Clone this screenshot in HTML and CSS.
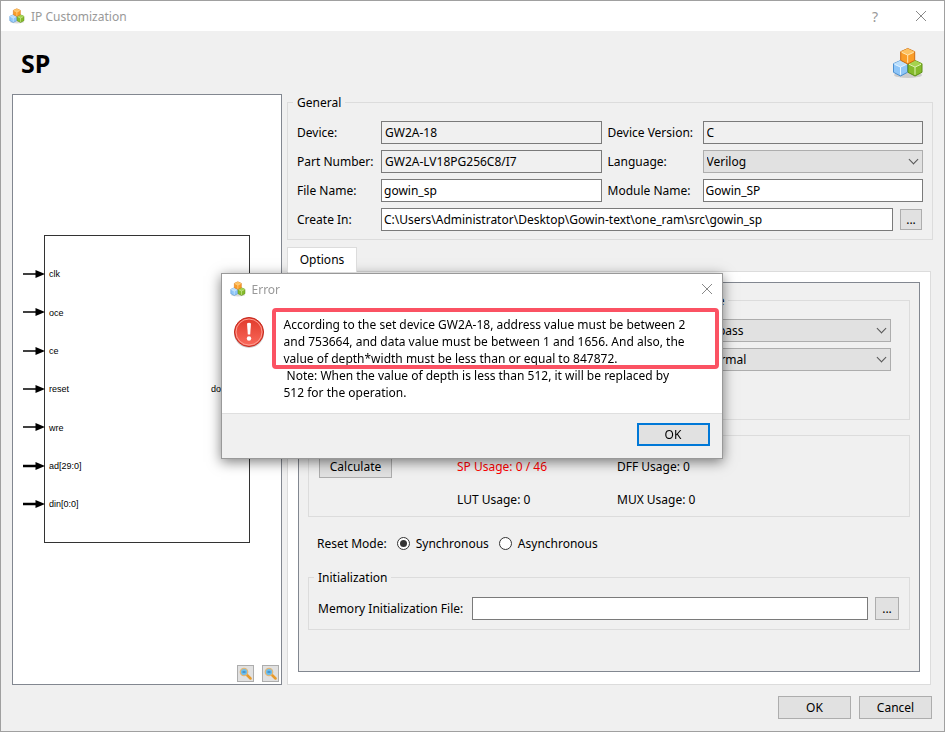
FILE: index.html
```html
<!DOCTYPE html>
<html lang="en">
<head>
    <meta charset="UTF-8">
    <meta name="viewport" content="width=device-width, initial-scale=1.0">
    <title>IP Customization</title>
    <link rel="stylesheet" href="styles.css">
</head>
<body>
    <!-- shared icons -->
    <svg class="defs" width="0" height="0" aria-hidden="true">
        <defs>
            <linearGradient id="redGrad" x1="0" y1="0" x2="0" y2="1">
                <stop offset="0" stop-color="#e0392a"/>
                <stop offset="1" stop-color="#fa6a5c"/>
            </linearGradient>
            <symbol id="cubes" viewBox="0 0 32 32">
                <ellipse cx="16" cy="28" rx="14" ry="3" fill="#000" opacity=".15"/>
                <path d="M8.5 13.5l7 3.2v8.6l-7 3.7-7-3.7v-8.6z" fill="#8fc6f8" stroke="#4b8fd0"/>
                <path d="M8.5 13.5l7 3.2-7 3.3-7-3.3z" fill="#b9defc"/>
                <path d="M2.5 17.3l6 2.8 6-2.8M8.5 20v7.8" fill="none" stroke="#e6f4ff"/>
                <path d="M23 13.5l7 3.2v8.6L23 29l-7-3.7v-8.6z" fill="#85bb2c" stroke="#5c8f14"/>
                <path d="M23 13.5l7 3.2-7 3.3-7-3.3z" fill="#a5d34f"/>
                <path d="M17 17.3l6 2.8 6-2.8M23 20v7.8" fill="none" stroke="#e0f3b4"/>
                <path d="M15.7 1.5l7 3.2v8.6l-7 3.7-7-3.7V4.7z" fill="#fa9d28" stroke="#cf6c10"/>
                <path d="M15.7 1.5l7 3.2-7 3.3-7-3.3z" fill="#fdc262"/>
                <path d="M9.7 5.3l6 2.8 6-2.8M15.7 8v7.8" fill="none" stroke="#ffe9b8"/>
            </symbol>
            <symbol id="close" viewBox="0 0 12 12">
                <path d="M1 1l10 10M11 1L1 11" fill="none" stroke="#888"/>
            </symbol>
            <symbol id="magnifier" viewBox="0 0 13 13">
                <path d="M7.5 7.5l4 4" stroke="#e89b2c" stroke-width="2.5" stroke-linecap="round"/>
                <circle cx="5" cy="5" r="3.7" fill="#69bdee" stroke="#e3b778" stroke-width="1.3"/>
                <path d="M3.5 5h3" stroke="#2c6fa8"/>
            </symbol>
            <symbol id="pin" viewBox="0 0 22 8">
                <path d="M0 4h14"/>
                <path d="M12.5 0L22 4l-9.5 4z" fill="#000" stroke="none"/>
            </symbol>
        </defs>
    </svg>

    <div class="window">
        <header class="titlebar">
            <svg class="title-icon"><use href="#cubes"/></svg>
            <span class="title">IP Customization</span>
            <button class="win-btn" type="button" aria-label="Help">?</button>
            <button class="win-btn" type="button" aria-label="Close"><svg><use href="#close"/></svg></button>
        </header>

        <div class="heading">
            <h1>SP</h1>
            <svg class="logo"><use href="#cubes"/></svg>
        </div>

        <main class="content">
            <section class="preview">
                <svg class="diagram" viewBox="0 0 247 308">
                    <rect x="21.5" y=".5" width="205" height="307"/>
                    <g class="pins">
                        <use href="#pin" x="0" y="35" width="22" height="8"/>
                        <use href="#pin" x="0" y="73" width="22" height="8"/>
                        <use href="#pin" x="0" y="112" width="22" height="8"/>
                        <use href="#pin" x="0" y="150" width="22" height="8"/>
                        <use href="#pin" x="0" y="188" width="22" height="8"/>
                        <use class="bus" href="#pin" x="0" y="227" width="22" height="8"/>
                        <use class="bus" href="#pin" x="0" y="265" width="22" height="8"/>
                    </g>
                    <text x="26" y="42">clk</text>
                    <text x="26" y="81">oce</text>
                    <text x="26" y="119">ce</text>
                    <text x="26" y="157">reset</text>
                    <text x="26" y="196">wre</text>
                    <text x="26" y="234">ad[29:0]</text>
                    <text x="26" y="272">din[0:0]</text>
                    <text x="188" y="157">dout[0:0]</text>
                </svg>
                <div class="zoom-tools">
                    <button type="button" aria-label="Zoom out"><svg><use href="#magnifier"/></svg></button>
                    <button type="button" aria-label="Zoom in"><svg><use href="#magnifier"/></svg></button>
                </div>
            </section>

            <section class="settings">
                <fieldset class="general">
                    <legend>General</legend>
                    <label for="device">Device:</label>
                    <input id="device" type="text" value="GW2A-18" readonly>
                    <label for="version">Device Version:</label>
                    <input id="version" type="text" value="C" readonly>
                    <label for="part">Part Number:</label>
                    <input id="part" type="text" value="GW2A-LV18PG256C8/I7" readonly>
                    <label for="language">Language:</label>
                    <div class="select">
                        <select id="language"><option>Verilog</option><option>VHDL</option></select>
                    </div>
                    <label for="file">File Name:</label>
                    <input id="file" type="text" value="gowin_sp">
                    <label for="module">Module Name:</label>
                    <input id="module" type="text" value="Gowin_SP">
                    <label for="path">Create In:</label>
                    <div class="path-row">
                        <input id="path" type="text" value="C:\Users\Administrator\Desktop\Gowin-text\one_ram\src\gowin_sp">
                        <button class="btn browse small" type="button">...</button>
                    </div>
                </fieldset>

                <button class="tab" type="button">Options</button>
                <div class="tab-page">
                    <div class="options">
                        <fieldset class="mode">
                            <legend>Read/Write Mode</legend>
                            <div class="select">
                                <select aria-label="Read Mode"><option>Bypass</option><option>Pipeline</option></select>
                            </div>
                            <div class="select">
                                <select aria-label="Write Mode"><option>Normal</option></select>
                            </div>
                        </fieldset>

                        <fieldset class="usage" aria-label="Resources Usage">
                            <button class="btn" type="button">Calculate</button>
                            <span class="over">SP Usage: 0 / 46</span>
                            <span>DFF Usage: 0</span>
                            <span class="lut">LUT Usage: 0</span>
                            <span>MUX Usage: 0</span>
                        </fieldset>

                        <div class="reset" role="radiogroup" aria-label="Reset Mode">
                            <span>Reset Mode:</span>
                            <label><input type="radio" name="reset" checked>Synchronous</label>
                            <label><input type="radio" name="reset">Asynchronous</label>
                        </div>

                        <fieldset class="init">
                            <legend>Initialization</legend>
                            <label for="memfile">Memory Initialization File:</label>
                            <input id="memfile" type="text">
                            <button class="btn browse" type="button">...</button>
                        </fieldset>
                    </div>
                </div>
            </section>
        </main>

        <footer class="actions">
            <button class="btn" type="button">OK</button>
            <button class="btn" type="button">Cancel</button>
        </footer>
    </div>

    <div class="overlay">
        <div class="dialog" role="alertdialog" aria-labelledby="dialogTitle">
            <div class="titlebar">
                <svg class="title-icon"><use href="#cubes"/></svg>
                <span class="title" id="dialogTitle">Error</span>
                <button class="win-btn" type="button" aria-label="Close"><svg><use href="#close"/></svg></button>
            </div>
            <div class="dialog-body">
                <svg class="error-icon" viewBox="0 0 32 32">
                    <circle cx="16" cy="17" r="15" fill="#000" opacity=".2"/>
                    <circle cx="16" cy="16" r="14.5" fill="url(#redGrad)" stroke="#c5281d"/>
                    <circle cx="16" cy="16" r="13" fill="none" stroke="#ff9e92"/>
                    <path d="M14 7.5q2-1.5 4 0l-.8 11h-2.4z" fill="#fff"/>
                    <circle cx="16" cy="22.5" r="2.2" fill="#fff"/>
                </svg>
                <div class="message">
                    <p class="marked">According to the set device GW2A-18, address value must be between 2<br>and 753664, and data value must be between 1 and 1656. And also, the<br>value of depth*width must be less than or equal to 847872.</p>
                    <p>&nbsp;Note: When the value of depth is less than 512, it will be replaced by<br>512 for the operation.</p>
                </div>
            </div>
            <div class="dialog-actions">
                <button class="btn default" type="button">OK</button>
            </div>
        </div>
    </div>
</body>
</html>
```
FILE: styles.css
```css
* { box-sizing: border-box; }
body { margin: 0; font: 12px/17px "Noto Sans", "Open Sans", sans-serif; color: #000; background: #f0f0f0; }
button, input, select { font: inherit; color: inherit; margin: 0; }
h1, p { margin: 0; }
svg { display: block; }
.defs { position: absolute; }

.window { display: flex; flex-direction: column; min-height: 100vh; border: 1px solid #a0a0a0; background: #f0f0f0; }
.titlebar { display: flex; align-items: center; height: 30px; padding-left: 8px; background: #fff; color: #999; }
.title-icon { width: 16px; height: 16px; margin-right: 6px; }
.title { flex: 1; }
.win-btn { display: flex; align-items: center; justify-content: center; width: 46px; height: 30px; padding: 0; border: 0; background: none; font-size: 14px; }
.win-btn svg { width: 12px; height: 12px; }

.heading { display: flex; align-items: center; justify-content: space-between; height: 63px; padding: 0 20px; }
h1 { font-size: 25px; line-height: 32px; }
.logo { width: 32px; height: 32px; }

.content { display: flex; flex: 1; gap: 5px; padding: 0 11px; }
.preview { display: flex; position: relative; flex: none; align-items: center; justify-content: center; width: 270px; padding: 0 2px 2px 0; border: 1px solid #828790; background: #fff; }
.diagram { width: 247px; height: 308px; }
.diagram rect { fill: none; stroke: #333; }
.diagram text { font: 9px "Liberation Sans", sans-serif; }
.pins { stroke: #000; stroke-width: 1.5px; }
.bus { stroke-width: 2.5px; }
.zoom-tools { display: flex; position: absolute; right: 2px; bottom: 2px; gap: 8px; }
.zoom-tools button { width: 17px; height: 17px; padding: 1px; border: 1px solid #adadad; background: #e1e1e1; }
.zoom-tools svg { width: 13px; height: 13px; }

.settings { display: flex; flex: 1; flex-direction: column; align-items: stretch; min-width: 0; }
fieldset { min-width: 0; margin: 0; border: 1px solid #dcdcdc; }
legend { margin-left: -4px; padding: 0 4px; }
input[type="text"] { width: 100%; min-width: 0; height: 23px; padding: 0 2px; border: 1px solid #7a7a7a; background: #fff; }
input[readonly] { padding-left: 3px; background: #f0f0f0; }
.btn { width: 73px; height: 23px; padding: 0; border: 1px solid #adadad; background: #e1e1e1; }
.btn.browse { flex: none; width: 24px; }
.btn.small { width: 22px; height: 21px; line-height: 16px; }
.select { position: relative; }
.select select { display: block; width: 100%; height: 23px; padding: 0 3px; border: 1px solid #adadad; border-radius: 0; background: #e1e1e1; appearance: none; }
.select::after { content: ""; position: absolute; top: 6px; right: 6px; width: 6px; height: 6px; border: solid #555; border-width: 0 1px 1px 0; transform: rotate(45deg); pointer-events: none; }

.general { display: grid; grid-template-columns: 78px 1fr 89px 1fr; gap: 6px; align-items: center; padding: 10px 9px 8px; }
.path-row { display: flex; grid-column: span 3; gap: 7px; align-items: center; padding-right: 1px; }
.general, .tab-page { white-space: nowrap; }

.tab { position: relative; z-index: 1; align-self: flex-start; width: 70px; height: 25px; margin: 7px 0 -1px; padding: 0 0 2px; border: 1px solid #dcdcdc; border-bottom: 0; background: #fff; }
.tab-page { display: flex; flex: 1; margin-right: 2px; padding: 10px 10px 12px; border: 1px solid #dcdcdc; background: #fff; }
.options { flex: 1; min-width: 0; padding: 9px; border: 1px solid #828790; background: #f0f0f0; }

.mode { display: grid; gap: 6px; align-content: start; width: 50%; height: 128px; margin-left: auto; padding: 10px 18px 8px 90px; }
.mode legend { margin-left: -78px; }
.usage { display: grid; grid-template-columns: 132px 154px 1fr; grid-auto-rows: 23px; gap: 10px 6px; align-items: center; margin-top: 15px; padding: 19px 10px 5px; }
.over { color: #f00; }
.lut { grid-column: 2; }
.reset { display: flex; gap: 10px; align-items: center; height: 17px; margin: 18px 0 17px 9px; }
.reset label { display: flex; gap: 6px; align-items: center; }
.reset input { display: grid; place-items: center; width: 13px; height: 13px; border: 1px solid #333; border-radius: 50%; background: #fff; appearance: none; }
.reset input:checked::before { content: ""; width: 7px; height: 7px; border-radius: 50%; background: #333; }
.init { display: flex; gap: 7px; align-items: center; padding: 11px 10px 9px 9px; }
.init label { flex: none; width: 147px; }

.actions { display: flex; gap: 8px; justify-content: flex-end; padding: 11px 12px 12px; }

.overlay { display: grid; position: fixed; inset: 0; place-items: center; padding-right: 2px; }
.dialog { width: 502px; border: 1px solid #999; background: #fff; box-shadow: 0 3px 12px rgba(0, 0, 0, 0.5); }
.dialog .win-btn { width: 30px; }
.dialog-body { display: flex; gap: 19px; padding: 12px 12px 12px 11px; }
.error-icon { flex: none; width: 32px; height: 32px; }
.message { flex: 1; white-space: nowrap; }
.marked { position: relative; }
.marked::before { content: ""; position: absolute; inset: -8px -9px -2px -12px; border: 4px solid #fb5263; border-radius: 4px; }
.dialog-actions { display: flex; justify-content: flex-end; padding: 9px 12px 12px; border-top: 1px solid #dfdfdf; background: #f0f0f0; }
.btn.default { border: 2px solid #0078d7; }
```
